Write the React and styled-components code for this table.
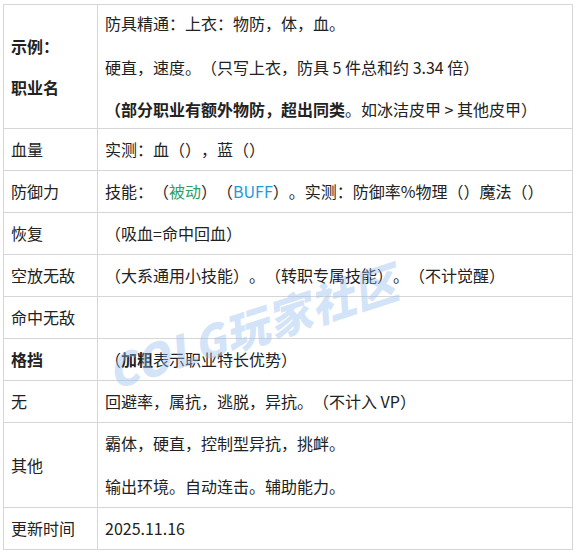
import React from 'react';
import styled, { createGlobalStyle } from 'styled-components';

const GlobalStyle = createGlobalStyle`
  body {
    margin: 0;
    background: #fff;
    font-family: 'Noto Sans CJK SC', 'Noto Sans', sans-serif;
    color: #222;
    text-spacing-trim: space-all;
  }
`;

const Wrapper = styled.div`
  position: relative;
  padding: 4px 3px;
  overflow: hidden;
`;

const Table = styled.table`
  width: 570px;
  border-collapse: collapse;
  font-size: 16px;
  line-height: 26px;
`;

const Cell = styled.td`
  border: 1px solid #d6d6d6;
  padding: ${props => (props.tight ? '5px 7px 6px' : '7px 7px 8px')};
  vertical-align: middle;
  white-space: nowrap;
  width: ${props => (props.head ? '79px' : 'auto')};
  font-weight: ${props => (props.bold ? 700 : 400)};
`;

const Line = styled.p`
  margin: ${props => props.top || 0}px 0 0;
  height: 26px;
`;

const Strong = styled.b`
  font-weight: 700;
`;

const Tint = styled.span`
  color: ${props => props.color};
`;

const Watermark = styled.div`
  position: absolute;
  left: 108px;
  top: 340px;
  font-size: 44px;
  font-weight: 900;
  font-style: italic;
  color: rgba(150, 190, 240, 0.42);
  transform: rotate(-18deg);
  transform-origin: left center;
  pointer-events: none;
  white-space: nowrap;
  letter-spacing: 1px;
`;

const rows = [
  { label: '血量', lines: ['实测：血（），蓝（）'] },
  {
    label: '防御力',
    lines: [
      <>
        技能：（<Tint color="#2f9e62">被动</Tint>）（<Tint color="#1d9bd8">BUFF</Tint>）。实测：防御率%物理（）魔法（）
      </>,
    ],
  },
  { label: '恢复', lines: ['（吸血=命中回血）'] },
  { label: '空放无敌', lines: ['（大系通用小技能）。（转职专属技能）。（不计觉醒）'] },
  { label: '命中无敌', lines: [''] },
  {
    label: '格挡',
    bold: true,
    lines: [
      <>
        （<Strong>加粗</Strong>表示职业特长优势）
      </>,
    ],
  },
  { label: '无', lines: ['回避率，属抗，逃脱，异抗。（不计入 VP）'] },
  { label: '其他', lines: ['霸体，硬直，控制型异抗，挑衅。', '输出环境。自动连击。辅助能力。'], gap: 17 },
  { label: '更新时间', lines: ['2025.11.16'] },
];

export default function App() {
  return (
    <>
      <GlobalStyle />
      <Wrapper>
        <Table>
          <tbody>
            <tr>
              <Cell head bold tight>
                <Line>示例：</Line>
                <Line top={15}>职业名</Line>
              </Cell>
              <Cell tight>
                <Line>防具精通：上衣：物防，体，血。</Line>
                <Line top={18}>硬直，速度。（只写上衣，防具 5 件总和约 3.34 倍）</Line>
                <Line top={16}>
                  <Strong>（部分职业有额外物防，超出同类</Strong>。如冰洁皮甲 &gt; 其他皮甲）
                </Line>
              </Cell>
            </tr>
            {rows.map(row => (
              <tr key={row.label}>
                <Cell head bold={row.bold}>
                  <Line>{row.label}</Line>
                </Cell>
                <Cell>
                  {row.lines.map((line, i) => (
                    <Line key={i} top={i > 0 ? row.gap : 0}>
                      {line || '\u00a0'}
                    </Line>
                  ))}
                </Cell>
              </tr>
            ))}
          </tbody>
        </Table>
        <Watermark>COLG玩家社区</Watermark>
      </Wrapper>
    </>
  );
}
